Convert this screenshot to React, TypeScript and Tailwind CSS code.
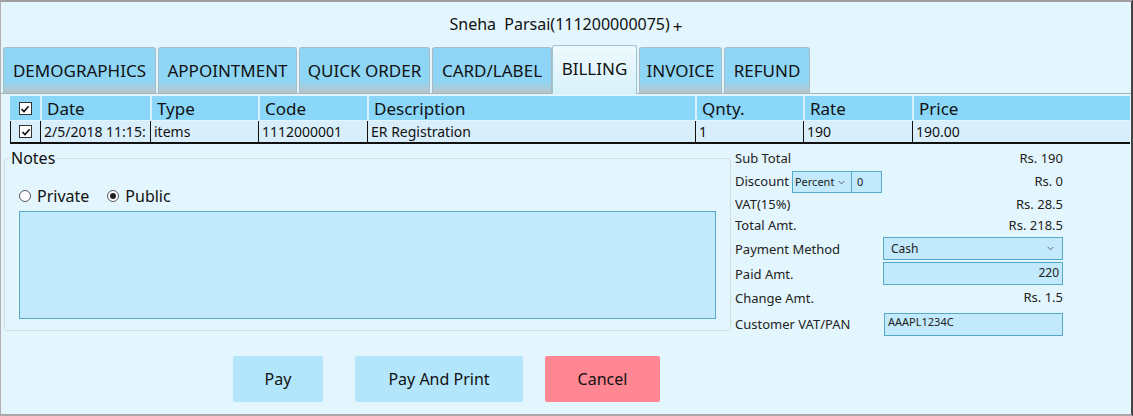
import React from 'react';

const font = { fontFamily: '"Noto Sans", "Open Sans", sans-serif' };

const tabs = ['DEMOGRAPHICS', 'APPOINTMENT', 'QUICK ORDER', 'CARD/LABEL', 'BILLING', 'INVOICE', 'REFUND'];
const tabWidths = ['w-[153px]', 'w-[139px]', 'w-[131px]', 'w-[120px]', 'w-[85px] -ml-[2px]', 'w-[83px]', 'w-[86px]'];

const cols = 'grid grid-cols-[30px_110px_108px_109px_328px_108px_109px_1fr]';

const Check: React.FC = () => (
    <span className="inline-flex items-center justify-center w-[13px] h-[13px] bg-white border border-[#333]">
        <svg viewBox="0 0 10 10" className="w-[10px] h-[10px]">
            <path d="M1.5 5.2 L4 7.6 L8.6 2.2" fill="none" stroke="#111" strokeWidth="1.6" />
        </svg>
    </span>
);

const Chevron: React.FC = () => (
    <svg viewBox="0 0 8 5" className="w-[7px] h-[5px]">
        <path d="M0.8 0.8 L4 4 L7.2 0.8" fill="none" stroke="#555" strokeWidth="1" />
    </svg>
);

export default function App() {
    return (
        <div
            style={font}
            className="w-[1133px] h-[416px] bg-[#e3f6fe] border-t-2 border-t-[#a0a0a0] border-l border-l-[#b0b0b0] border-r-2 border-r-[#444] border-b-2 border-b-[#a8a8a8] flex flex-col text-[#111] overflow-hidden"
        >
            {/* title */}
            <div className="h-[44px] flex items-center justify-center text-[16px]">
                <span>Sneha&nbsp;&nbsp;Parsai(111200000075)</span>
                <span className="ml-[3px] mt-[6px] text-[17px]">+</span>
            </div>

            {/* tabs */}
            <div className="h-[48px] flex items-end pl-[2px] gap-[2px] border-b border-[#a9b4b8]">
                {tabs.map((t, i) => {
                    const active = t === 'BILLING';
                    return (
                        <div
                            key={t}
                            className={
                                tabWidths[i] +
                                ' flex items-center justify-center text-[17px] rounded-t-[3px] border border-b-0 ' +
                                (active
                                    ? 'h-[49px] -mb-px pb-[3px] bg-gradient-to-b from-[#eefafe] to-[#d7f1fb] border-[#9fc3d0]'
                                    : 'h-[46px] bg-gradient-to-b from-[#8fd6f6] via-[#8fd6f6] via-75% to-[#b8c4c8] border-[#a9bcc4]')
                            }
                        >
                            {t}
                        </div>
                    );
                })}
            </div>

            {/* grid */}
            <div className="ml-[9px] mr-[1px] mt-[2px]">
                <div className={cols + ' h-[24px] bg-[#8ad7fa] text-[17px]'}>
                    <div className="flex items-center justify-center">
                        <Check />
                    </div>
                    {['Date', 'Type', 'Code', 'Description', 'Qnty.', 'Rate', 'Price'].map((h) => (
                        <div key={h} className="flex items-center pl-[5px] border-l-2 border-[#d9f1fc]">
                            {h}
                        </div>
                    ))}
                </div>
                <div className={cols + ' h-[23px] bg-[#d9eefb] text-[14px] border-b-2 border-[#111] mt-px'}>
                    <div className="flex items-center justify-center border-l border-[#111]">
                        <Check />
                    </div>
                    {['2/5/2018 11:15:', 'items', '1112000001', 'ER Registration', '1', '190', '190.00'].map((c, i) => (
                        <div key={i} className="flex items-center pl-[3px] border-l border-[#111] overflow-hidden whitespace-nowrap">
                            {c}
                        </div>
                    ))}
                </div>
            </div>

            {/* middle */}
            <div className="flex mt-[4px]">
                <fieldset className="ml-[3px] w-[727px] h-[183px] border border-[#d3dde1] rounded-[3px] px-[14px] pb-[13px]">
                    <legend className="-ml-[10px] px-[2px] text-[16px] leading-[20px]">Notes</legend>
                    <div className="flex items-center gap-[18px] mt-[17px] text-[16px] h-[22px]">
                        <label className="flex items-center gap-[6px]">
                            <span className="w-[12px] h-[12px] rounded-full border border-[#555] bg-white" />
                            Private
                        </label>
                        <label className="flex items-center gap-[6px]">
                            <span className="w-[12px] h-[12px] rounded-full border border-[#555] bg-white flex items-center justify-center">
                                <span className="w-[6px] h-[6px] rounded-full bg-[#222]" />
                            </span>
                            Public
                        </label>
                    </div>
                    <div className="mt-[4px] h-[108px] bg-[#c3e9fc] border border-[#56a9c9]" />
                </fieldset>

                <div className="ml-[4px] w-[328px] text-[13px] text-[#222]">
                    <div className="h-[22px] flex items-center justify-between">
                        <span>Sub Total</span>
                        <span>Rs. 190</span>
                    </div>
                    <div className="h-[24px] flex items-center justify-between">
                        <div className="flex items-center">
                            <span>Discount</span>
                            <div className="ml-[3px] w-[60px] h-[22px] bg-[#c3e9fc] border border-[#56a9c9] flex items-center justify-between px-[2px] text-[11px]">
                                <span>Percent</span>
                                <span className="mr-[4px] flex">
                                    <Chevron />
                                </span>
                            </div>
                            <div className="w-[30px] h-[22px] bg-[#c3e9fc] border border-l-0 border-[#56a9c9] flex items-center px-[5px] text-[11px]">
                                0
                            </div>
                        </div>
                        <span>Rs. 0</span>
                    </div>
                    <div className="h-[21px] flex items-center justify-between">
                        <span>VAT(15%)</span>
                        <span>Rs. 28.5</span>
                    </div>
                    <div className="h-[21px] flex items-center justify-between">
                        <span>Total Amt.</span>
                        <span>Rs. 218.5</span>
                    </div>
                    <div className="h-[25px] flex items-center justify-between">
                        <span className="mt-[2px]">Payment Method</span>
                        <div className="w-[180px] h-[23px] bg-[#c3e9fc] border border-[#56a9c9] flex items-center justify-between pl-[7px] pr-[8px] text-[12px]">
                            <span>Cash</span>
                            <Chevron />
                        </div>
                    </div>
                    <div className="h-[24px] flex items-center justify-between">
                        <span className="mt-[3px]">Paid Amt.</span>
                        <div className="w-[180px] h-[23px] bg-[#c3e9fc] border border-[#56a9c9] flex items-center justify-end pr-[3px] text-[12px]">
                            220
                        </div>
                    </div>
                    <div className="h-[25px] flex items-center justify-between">
                        <span className="mt-[2px]">Change Amt.</span>
                        <span>Rs. 1.5</span>
                    </div>
                    <div className="h-[26px] flex items-center justify-between">
                        <span className="mt-[3px]">Customer VAT/PAN</span>
                        <div className="w-[179px] h-[23px] bg-[#c3e9fc] border border-[#56a9c9] pl-[3px] text-[11px] leading-[16px] mt-[2px]">
                            AAAPL1234C
                        </div>
                    </div>
                </div>
            </div>

            {/* buttons */}
            <div className="flex mt-[20px] pl-[232px] text-[16px]">
                <button className="w-[90px] h-[46px] bg-[#b3e6fb] rounded-[2px]">Pay</button>
                <button className="ml-[32px] w-[168px] h-[46px] bg-[#b3e6fb] rounded-[2px]">Pay And Print</button>
                <button className="ml-[22px] w-[115px] h-[46px] bg-[#fe8793] rounded-[2px]">Cancel</button>
            </div>
        </div>
    );
}
